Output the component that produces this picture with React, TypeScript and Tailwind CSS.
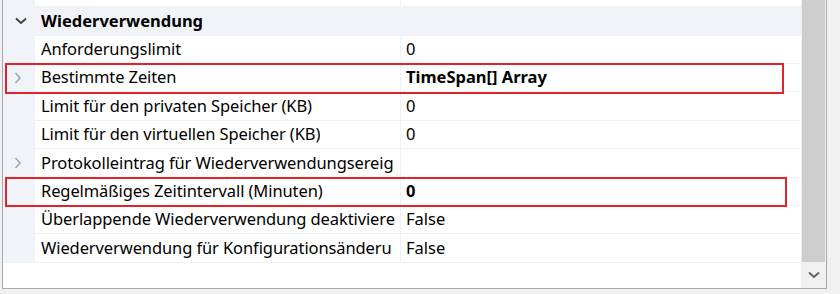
import React from "react";

type Row = {
  name: string;
  value?: string;
  expandable?: boolean;
  bold?: boolean;
  h: string;
};

// names as far as the narrow name column shows them
const rows: Row[] = [
  { name: "Anforderungslimit", value: "0", h: "h-[28px]" },
  { name: "Bestimmte Zeiten", value: "TimeSpan[] Array", expandable: true, bold: true, h: "h-[28px]" },
  { name: "Limit für den privaten Speicher (KB)", value: "0", h: "h-[29px]" },
  { name: "Limit für den virtuellen Speicher (KB)", value: "0", h: "h-[28px]" },
  { name: "Protokolleintrag für Wiederverwendungsereig", value: "", expandable: true, h: "h-[29px]" },
  { name: "Regelmäßiges Zeitintervall (Minuten)", value: "0", bold: true, h: "h-[28px]" },
  { name: "Überlappende Wiederverwendung deaktiviere", value: "False", h: "h-[28px]" },
  { name: "Wiederverwendung für Konfigurationsänderu", value: "False", h: "h-[29px]" },
];

function ChevronRight() {
  return (
    <svg width="8" height="12" viewBox="0 0 8 12" className="block">
      <polyline points="1.5,1 6,6 1.5,11" fill="none" stroke="#a6a6a6" strokeWidth="1.6" />
    </svg>
  );
}

function ChevronDown({ color = "#404040" }: { color?: string }) {
  return (
    <svg width="12" height="8" viewBox="0 0 12 8" className="block">
      <polyline points="1,1.5 6,6 11,1.5" fill="none" stroke={color} strokeWidth="1.8" />
    </svg>
  );
}

function PropertyRow({ row }: { row: Row }) {
  return (
    <div className={`flex ${row.h} border-b border-[#eef2f8]`}>
      <div className="w-[32px] shrink-0 bg-[#f0f4f9] flex items-center pl-[11px]">
        {row.expandable && <ChevronRight />}
      </div>
      <div className="w-[366px] shrink-0 border-r border-[#eef2f8] pl-[6px] flex items-center overflow-hidden">
        <span className="block overflow-hidden whitespace-nowrap tracking-[-0.1px]">{row.name}</span>
      </div>
      <div className={`flex-1 pl-[5px] flex items-center whitespace-nowrap ${row.bold ? "font-bold" : ""}`}>
        {row.value}
      </div>
    </div>
  );
}

export default function App() {
  return (
    <div
      className="relative w-[840px] h-[294px] bg-[#f0f0f0] overflow-hidden text-[16.5px] text-black"
      style={{ fontFamily: '"Noto Sans", "Open Sans", sans-serif' }}
    >
      <div className="ml-[2px] w-[825px] h-[289px] flex bg-white border-l border-r border-b border-[#a9a9a9]">
        {/* property grid */}
        <div className="w-[798px] shrink-0 flex flex-col">
          <div className="flex h-[7px] border-b border-[#eef2f8]">
            <div className="w-[32px] shrink-0 bg-[#f0f4f9]" />
            <div className="w-[366px] shrink-0 border-r border-[#eef2f8]" />
            <div className="flex-1" />
          </div>
          <div className="flex h-[29px] bg-[#f0f4f9] border-b border-[#eef2f8]">
            <div className="w-[32px] shrink-0 flex items-center pl-[12px]">
              <ChevronDown />
            </div>
            <div className="pl-[6px] flex items-center font-bold whitespace-nowrap">Wiederverwendung</div>
          </div>
          {rows.map((r) => (
            <PropertyRow key={r.name} row={r} />
          ))}
        </div>
        {/* scrollbar */}
        <div className="flex-1 flex flex-col bg-[#f0f0f0] px-[1px]">
          <div className="h-[262px] bg-[#cdcdcd]" />
          <div className="flex-1 flex items-center justify-center">
            <ChevronDown color="#606060" />
          </div>
        </div>
      </div>

      {/* highlight boxes */}
      <div className="absolute left-[5px] top-[63px] w-[779px] h-[31px] border-2 border-[#e3232b]" />
      <div className="absolute left-[5px] top-[177px] w-[782px] h-[30px] border-2 border-[#e3232b]" />
    </div>
  );
}
